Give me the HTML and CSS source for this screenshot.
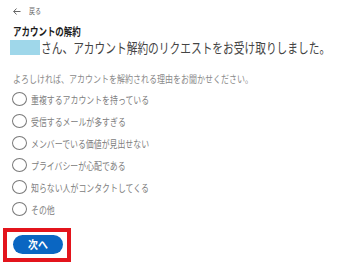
FILE: index.html
```html
<html>

<head>
    <link rel="stylesheet" href="styles.css">
</head>

<body>
    <div class="page">
        <div class="back">
            <svg class="arrow" width="8" height="7" viewBox="0 0 8 7">
                <path d="M3.5 0.5 L0.7 3.5 L3.5 6.5 M0.7 3.5 H7.5" fill="none" stroke="#666" stroke-width="1"/>
            </svg>
            <span class="squeeze back-text">戻る</span>
        </div>

        <h1 class="title"><span class="squeeze">アカウントの解約</span></h1>

        <div class="greeting">
            <span class="name-mask"></span>
            <span class="squeeze">さん、アカウント解約のリクエストをお受け取りしました。</span>
        </div>

        <p class="lead"><span class="squeeze">よろしければ、アカウントを解約される理由をお聞かせください。</span></p>

        <div class="reasons">
            <label class="reason"><span class="radio"></span><span class="squeeze">重複するアカウントを持っている</span></label>
            <label class="reason"><span class="radio"></span><span class="squeeze">受信するメールが多すぎる</span></label>
            <label class="reason"><span class="radio"></span><span class="squeeze">メンバーでいる価値が見出せない</span></label>
            <label class="reason"><span class="radio"></span><span class="squeeze">プライバシーが心配である</span></label>
            <label class="reason"><span class="radio"></span><span class="squeeze">知らない人がコンタクトしてくる</span></label>
            <label class="reason"><span class="radio"></span><span class="squeeze">その他</span></label>
        </div>

        <div class="highlight">
            <button class="next"><span class="squeeze">次へ</span></button>
        </div>
    </div>
</body>

</html>
```

FILE: styles.css
```css
body {
    margin: 0;
    background: #fff;
    overflow: hidden;
    font-family: "Noto Sans CJK JP", "Liberation Sans", sans-serif;
}

.page {
    display: flex;
    flex-direction: column;
    align-items: flex-start;
    padding: 6px 0 0 0;
}

/* the shot is squashed sideways, so glyphs are narrowed to match */
.squeeze {
    display: inline-block;
    white-space: nowrap;
    transform-origin: left center;
    transform: scaleX(0.77);
}

.back {
    display: flex;
    align-items: center;
    height: 10px;
    margin-left: 13px;
}

.arrow {
    margin-right: 8px;
}

.back-text {
    font-size: 8px;
    line-height: 10px;
    color: #666;
    transform: scaleX(0.75);
}

.title {
    margin: 9px 0 0 13px;
    font-size: 11px;
    line-height: 13px;
    font-weight: bold;
    color: #1a1a1a;
}

.greeting {
    display: flex;
    align-items: center;
    align-self: stretch;
    margin: 2px 0 0 10px;
    height: 15px;
    font-size: 14px;
    line-height: 15px;
    color: #444;
}

.name-mask {
    flex: none;
    width: 30px;
    height: 15px;
    background: #9fd7ea;
    margin-right: 1px;
}

.greeting .squeeze {
    transform: scaleX(0.765);
}

.lead {
    margin: 18px 0 0 13px;
    font-size: 10px;
    line-height: 12px;
    color: #8a8a8a;
}

.lead .squeeze {
    transform: scaleX(0.8);
}

.reasons {
    display: flex;
    flex-direction: column;
    margin: 3px 0 0 12px;
}

.reason {
    display: flex;
    align-items: center;
    height: 22px;
    font-size: 10px;
    color: #808080;
}

.radio {
    width: 13px;
    height: 12px;
    border: 1px solid #7a7a7a;
    border-radius: 50%;
    margin-right: 4px;
}

.reason .squeeze {
    transform: scaleX(0.79);
}

.highlight {
    display: flex;
    margin: 8px 0 0 3px;
    padding: 3px 4px 4px 6px;
    border: 4px solid #e3141c;
}

.next {
    width: 50px;
    height: 19px;
    padding: 0;
    border: none;
    border-radius: 10px;
    background: #0a66c2;
    color: #fff;
    font-family: "Noto Sans CJK JP", sans-serif;
    font-size: 11px;
    font-weight: bold;
    line-height: 19px;
    display: flex;
    justify-content: center;
    align-items: center;
}

.next .squeeze {
    transform-origin: center;
    transform: scaleX(0.9);
}
```
